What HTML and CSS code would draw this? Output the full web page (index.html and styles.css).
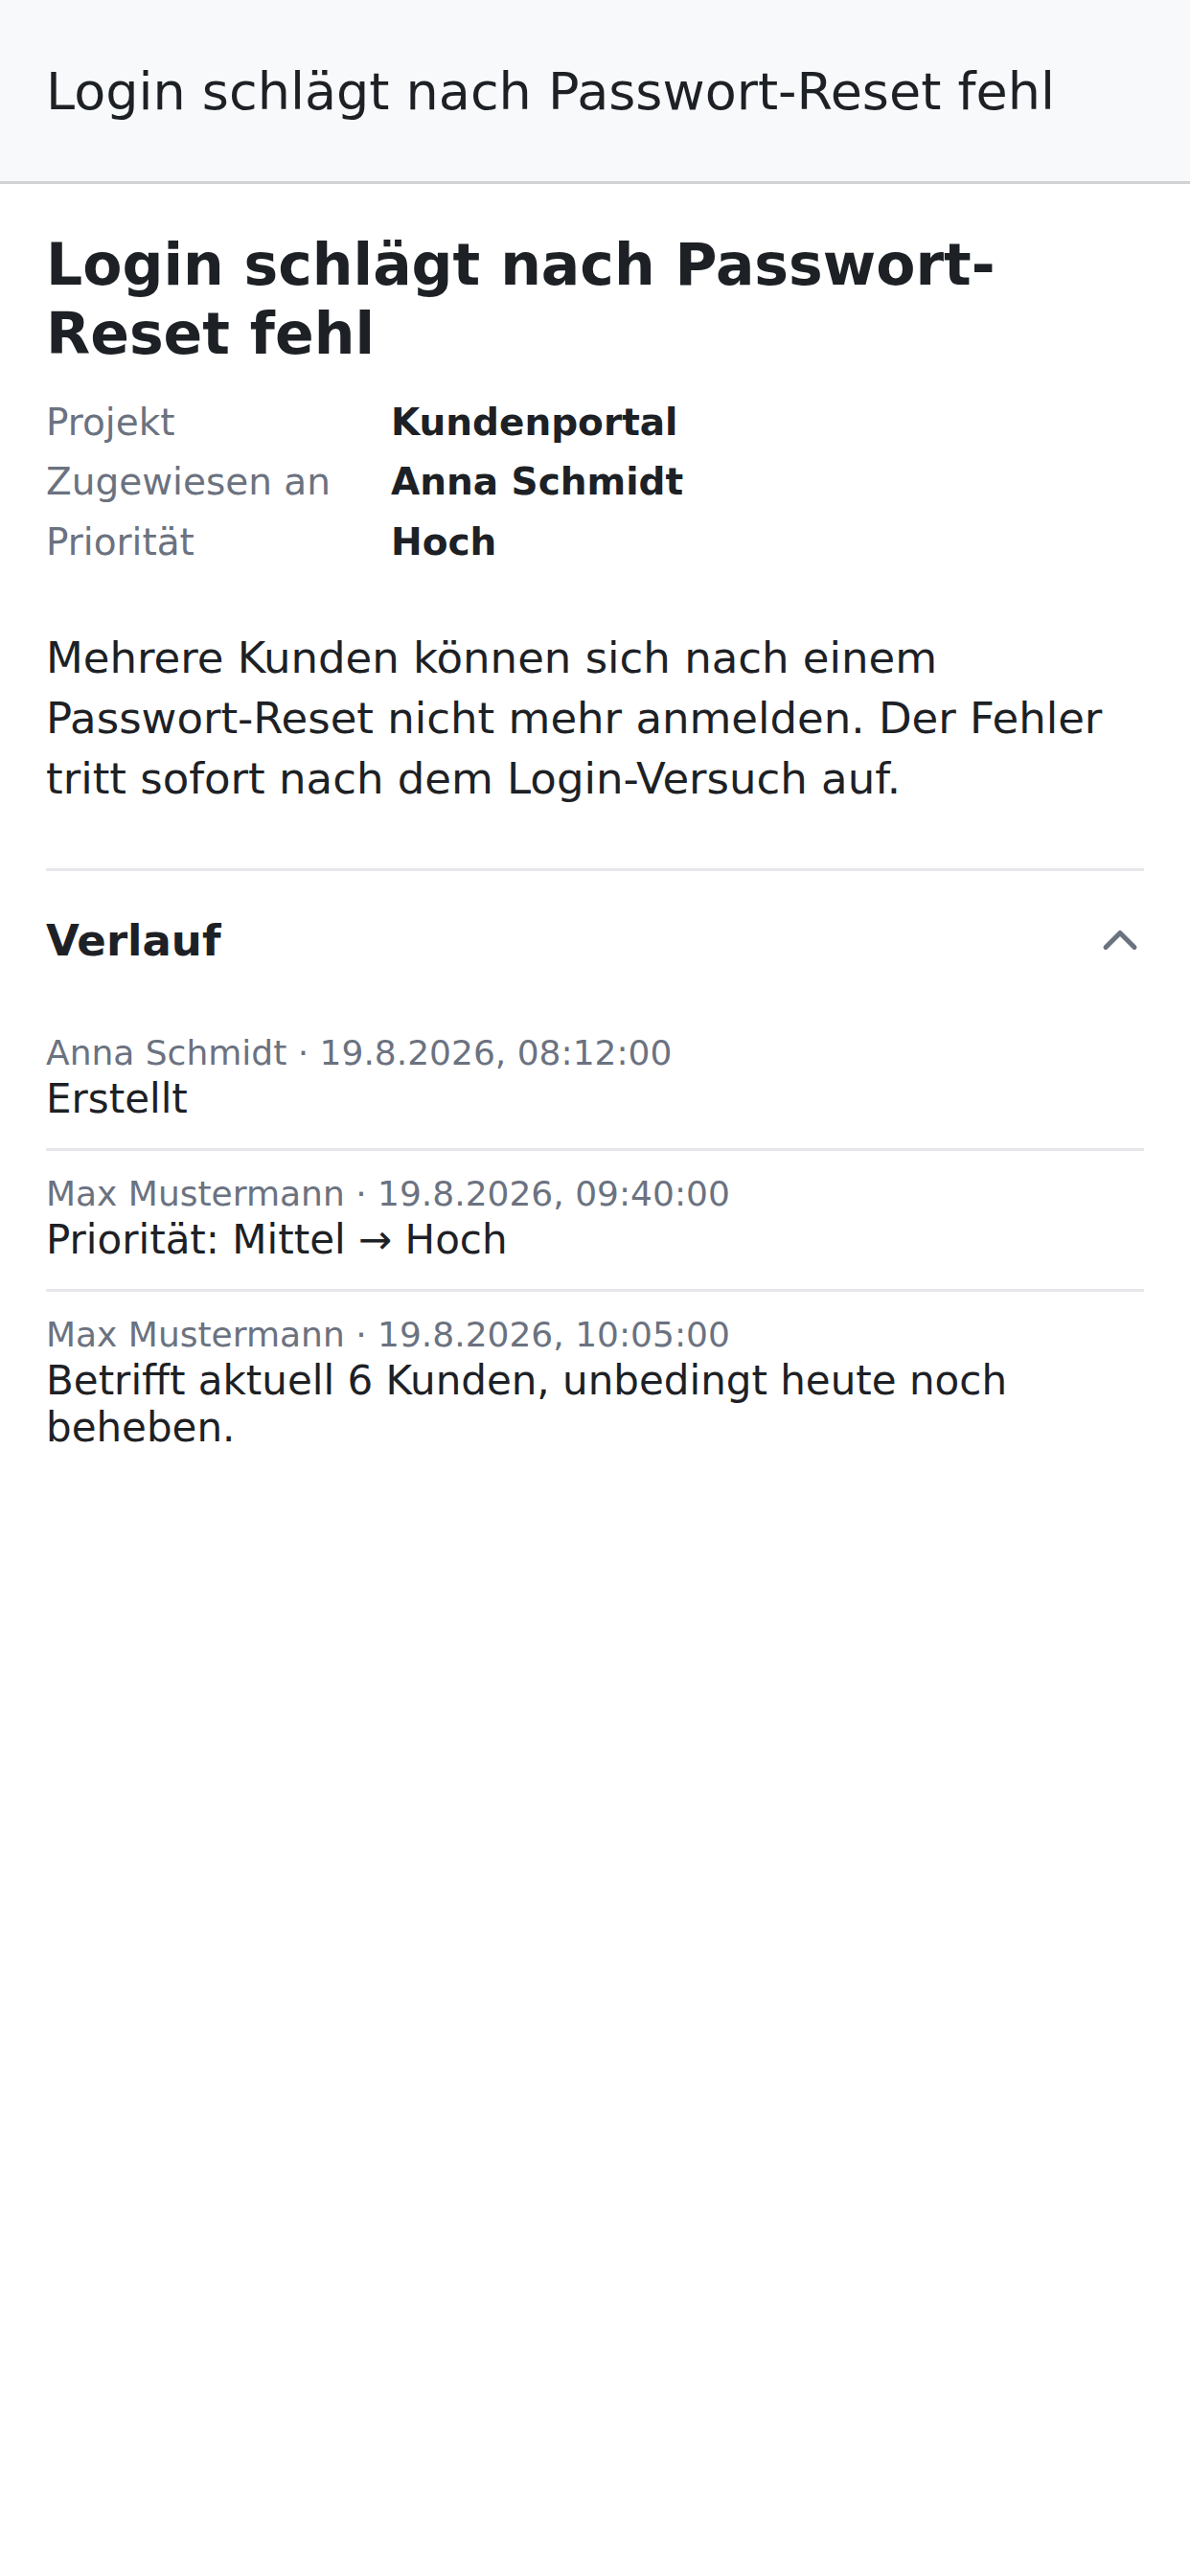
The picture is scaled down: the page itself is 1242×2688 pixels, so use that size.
FILE: index.html
```html
<!DOCTYPE html>
<html lang="de">
<head>
<meta charset="utf-8">
<title>Login schlägt nach Passwort-Reset fehl</title>
<link rel="stylesheet" href="styles.css">
</head>
<body>
<header class="topbar">
  <div class="topbar-title">Login schlägt nach Passwort-Reset fehl</div>
</header>
<main class="ticket">
  <h1 class="ticket-title">Login schlägt nach Passwort-Reset fehl</h1>
  <dl class="meta">
    <dt>Projekt</dt><dd>Kundenportal</dd>
    <dt>Zugewiesen an</dt><dd>Anna Schmidt</dd>
    <dt>Priorität</dt><dd>Hoch</dd>
  </dl>
  <p class="description">Mehrere Kunden können sich nach einem Passwort-Reset nicht mehr anmelden. Der Fehler tritt sofort nach dem Login-Versuch auf.</p>
  <section class="history">
    <div class="history-head">
      <h2 class="history-title">Verlauf</h2>
      <svg class="chevron" viewBox="0 0 24 24" fill="none" stroke="currentColor" stroke-width="2" stroke-linecap="round" stroke-linejoin="round"><path d="M18 15l-6-6-6 6"/></svg>
    </div>
    <ul class="entries">
      <li class="entry">
        <div class="entry-meta">Anna Schmidt · 19.8.2026, 08:12:00</div>
        <div class="entry-text">Erstellt</div>
      </li>
      <li class="entry">
        <div class="entry-meta">Max Mustermann · 19.8.2026, 09:40:00</div>
        <div class="entry-text">Priorität: Mittel → Hoch</div>
      </li>
      <li class="entry">
        <div class="entry-meta">Max Mustermann · 19.8.2026, 10:05:00</div>
        <div class="entry-text">Betrifft aktuell 6 Kunden, unbedingt heute noch beheben.</div>
      </li>
    </ul>
  </section>
</main>
</body>
</html>
```
FILE: styles.css
```css
* { box-sizing: border-box; }
html, body { margin: 0; padding: 0; background: #ffffff; }
body {
  font-family: "DejaVu Sans", sans-serif;
  color: #1d2125;
}
.topbar {
  background: #f8f9fa;
  border-bottom: 3px solid #d2d2d2;
  padding: 64px 48px 62px;
}
.topbar-title {
  font-size: 54px;
  line-height: normal;
  white-space: nowrap;
}
.ticket {
  padding: 48px 48px;
}
.ticket-title {
  margin: 0;
  font-size: 60px;
  font-weight: bold;
  line-height: 72px;
}
.meta {
  margin: 26px 0 0;
  display: grid;
  grid-template-columns: 360px 1fr;
  font-size: 39px;
  line-height: 62.4px;
}
.meta dt { color: #6b7280; margin: 0; }
.meta dd { margin: 0; font-weight: bold; }
.description {
  margin: 58px 0 0;
  font-size: 45px;
  line-height: 63px;
  padding-bottom: 62px;
  border-bottom: 3px solid #e5e7eb;
}
.history-head {
  display: flex;
  align-items: center;
  justify-content: space-between;
  padding: 42px 0 43px;
}
.history-title {
  margin: 0;
  font-size: 45px;
  font-weight: bold;
  line-height: normal;
}
.chevron {
  width: 60px;
  height: 60px;
  color: #6b7280;
  margin-right: -5px;
}
.entries {
  list-style: none;
  margin: 0;
  padding: 0;
}
.entry {
  padding: 24px 0 27px;
  border-bottom: 3px solid #e5e7eb;
}
.entry:last-child { border-bottom: none; }
.entry-meta {
  font-size: 36px;
  line-height: normal;
  color: #6b7280;
  margin-bottom: 3px;
}
.entry-text {
  font-size: 42px;
  line-height: normal;
}
```
